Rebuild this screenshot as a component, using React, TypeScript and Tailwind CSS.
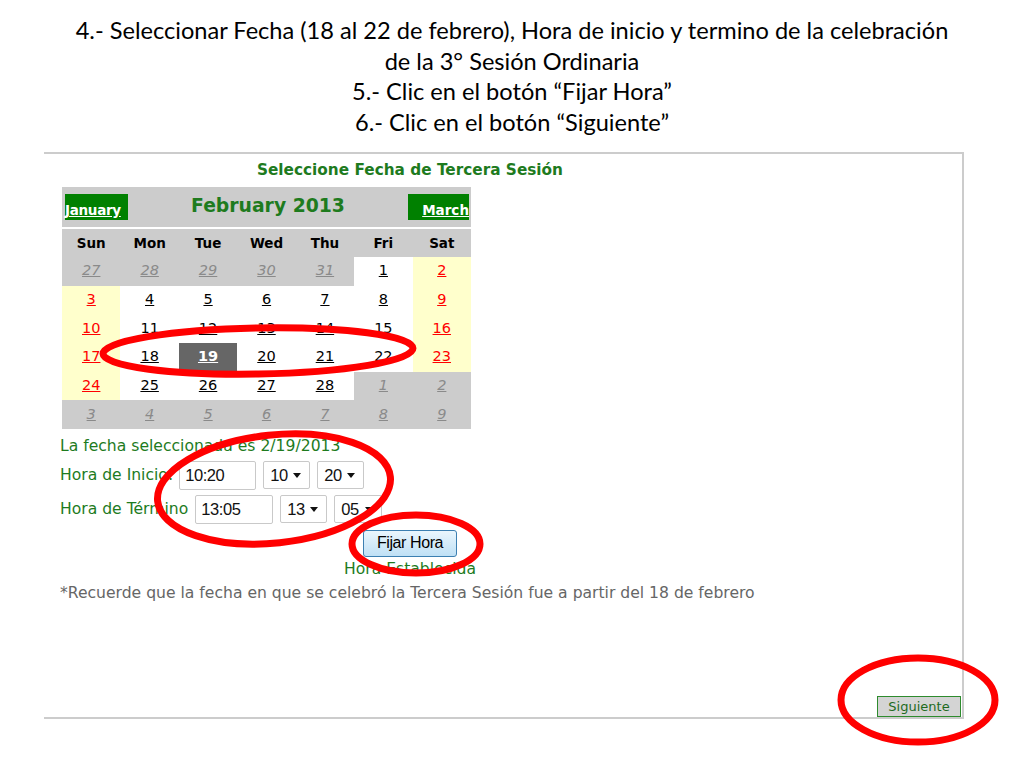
import React from "react";

type Cell = { d: number; kind: "other" | "week" | "weekend" | "sel"; link?: boolean };

const rows: Cell[][] = [
    [
        { d: 27, kind: "other" }, { d: 28, kind: "other" }, { d: 29, kind: "other" }, { d: 30, kind: "other" },
        { d: 31, kind: "other" }, { d: 1, kind: "week" }, { d: 2, kind: "weekend" },
    ],
    [
        { d: 3, kind: "weekend" }, { d: 4, kind: "week" }, { d: 5, kind: "week" }, { d: 6, kind: "week" },
        { d: 7, kind: "week" }, { d: 8, kind: "week" }, { d: 9, kind: "weekend" },
    ],
    [
        { d: 10, kind: "weekend" }, { d: 11, kind: "week", link: false }, { d: 12, kind: "week" }, { d: 13, kind: "week" },
        { d: 14, kind: "week" }, { d: 15, kind: "week", link: false }, { d: 16, kind: "weekend" },
    ],
    [
        { d: 17, kind: "weekend" }, { d: 18, kind: "week" }, { d: 19, kind: "sel" }, { d: 20, kind: "week" },
        { d: 21, kind: "week" }, { d: 22, kind: "week", link: false }, { d: 23, kind: "weekend" },
    ],
    [
        { d: 24, kind: "weekend" }, { d: 25, kind: "week" }, { d: 26, kind: "week" }, { d: 27, kind: "week" },
        { d: 28, kind: "week" }, { d: 1, kind: "other" }, { d: 2, kind: "other" },
    ],
    [
        { d: 3, kind: "other" }, { d: 4, kind: "other" }, { d: 5, kind: "other" }, { d: 6, kind: "other" },
        { d: 7, kind: "other" }, { d: 8, kind: "other" }, { d: 9, kind: "other" },
    ],
];

const cellClass = {
    other: "bg-[#cccccc] text-[#8a8a8a] italic underline",
    week: "bg-white text-black",
    weekend: "bg-[#ffffcc] text-[#ff0000] underline",
    sel: "bg-[#666666] text-white font-bold underline",
};

const Select = ({ value, w }: { value: string; w: string }) => (
    <div className={`${w} h-[28px] flex items-center justify-between pl-[6px] pr-[8px] border border-[#c9c9c9] rounded-[2px] bg-white text-[16.5px] text-[#111] tracking-tight font-['Liberation_Sans',sans-serif]`}>
        <span>{value}</span>
        <svg width="8" height="5" viewBox="0 0 8 5">
            <path d="M0 0h8L4 5z" fill="#111" />
        </svg>
    </div>
);

const TextBox = ({ value, w }: { value: string; w: string }) => (
    <div className={`${w} h-[29px] flex items-center pl-[5px] border border-[#c9c9c9] rounded-[2px] bg-white text-[16.5px] text-[#111] tracking-tight font-['Liberation_Sans',sans-serif]`}>
        {value}
    </div>
);

export default function App() {
    return (
        <div className="relative w-[1024px] h-[768px] bg-white overflow-hidden">
            {/* Slide heading */}
            <div className="pt-[15px] text-center text-[23.6px] leading-[30.5px] text-black font-['Lato',sans-serif]">
                <p>4.- Seleccionar Fecha (18 al 22 de febrero), Hora de inicio y termino de la celebración</p>
                <p>de la 3° Sesión Ordinaria</p>
                <p>5.- Clic en el botón “Fijar Hora”</p>
                <p>6.- Clic en el botón “Siguiente”</p>
            </div>

            {/* Screenshot frame */}
            <div className="absolute left-[44px] top-[152px] w-[920px] h-[567px] flex flex-col border-t-2 border-r-2 border-b-2 border-[#cccccc] font-['DejaVu_Sans',sans-serif]">
                <div className="w-[700px] ml-[16px] flex flex-col">
                    <p className="mt-[6px] text-center text-[15.3px] leading-[20px] font-bold text-[#1e7b1e]">
                        Seleccione Fecha de Tercera Sesión
                    </p>

                    {/* Calendar */}
                    <div className="mt-[7px] ml-[2px] w-[409px] flex flex-col">
                        <div className="h-[40px] bg-[#cccccc] flex items-center justify-between pl-[3px] pr-[2px]">
                            <div className="w-[63px] h-[26px] bg-[#008000] flex items-end">
                                <span className="text-white text-[13.5px] font-bold underline leading-[19px] tracking-[-0.3px]">January</span>
                            </div>
                            <span className="text-[#1e7b1e] text-[18.8px] font-bold pb-[2px]">February 2013</span>
                            <div className="w-[61px] h-[26px] bg-[#008000] flex items-end justify-end">
                                <span className="text-white text-[13.5px] font-bold underline leading-[19px]">March</span>
                            </div>
                        </div>
                        <div className="mt-[2px] h-[28px] bg-[#cccccc] grid grid-cols-7 items-center text-center text-[13.5px] font-bold text-black">
                            {["Sun", "Mon", "Tue", "Wed", "Thu", "Fri", "Sat"].map((d) => (
                                <span key={d}>{d}</span>
                            ))}
                        </div>
                        {rows.map((row, ri) => (
                            <div key={ri} className="grid grid-cols-7 h-[28.67px]">
                                {row.map((c, ci) => (
                                    <div
                                        key={ci}
                                        className={`flex items-center justify-center text-[14.5px] ${cellClass[c.kind]} ${c.kind === "week" && c.link !== false ? "underline" : ""}`}
                                    >
                                        {c.d}
                                    </div>
                                ))}
                            </div>
                        ))}
                    </div>

                    {/* Form */}
                    <div className="text-[15.6px] text-[#1e7b1e] flex flex-col">
                        <p className="mt-[8px] leading-[18px]">La fecha seleccionada es 2/19/2013</p>
                        <div className="mt-[6px] flex items-center gap-[7px]">
                            <span className="mr-[-1px]">Hora de Inicio:</span>
                            <TextBox value="10:20" w="w-[77px]" />
                            <Select value="10" w="w-[47px]" />
                            <Select value="20" w="w-[47px]" />
                        </div>
                        <div className="mt-[5px] flex items-center gap-[7px]">
                            <span>Hora de Término</span>
                            <TextBox value="13:05" w="w-[78px]" />
                            <Select value="13" w="w-[47px]" />
                            <Select value="05" w="w-[48px]" />
                        </div>
                        <div className="mt-[6px] flex justify-center">
                            <button className="w-[94px] h-[27px] rounded-[3px] border border-[#3c7fb1] bg-gradient-to-b from-[#eaf6fd] to-[#bfe0f5] text-[16px] text-black tracking-tight font-['Liberation_Sans',sans-serif]">
                                Fijar Hora
                            </button>
                        </div>
                        <p className="mt-[2px] text-center leading-[20px]">Hora Establecida</p>
                        <p className="mt-[5px] leading-[18px] text-[#666666] whitespace-nowrap">
                            *Recuerde que la fecha en que se celebró la Tercera Sesión fue a partir del 18 de febrero
                        </p>
                    </div>
                </div>

                <div className="mt-auto flex justify-end">
                    <button className="relative mr-[1px] w-[84px] h-[21px] bg-[#d4d4d4] border border-[#2e8b2e] text-[13px] text-[#1e6b1e]">
                        Siguiente
                    </button>
                </div>
            </div>

            {/* Red annotation ellipses */}
            <svg className="absolute inset-0 pointer-events-none" width="1024" height="768" viewBox="0 0 1024 768">
                <g fill="none" stroke="#ff0000" strokeWidth="7">
                    <ellipse cx="258" cy="351" rx="155" ry="23" transform="rotate(-1 258 351)" />
                    <ellipse cx="274" cy="489" rx="117" ry="54" transform="rotate(-6 274 489)" />
                    <ellipse cx="416" cy="544" rx="64" ry="29" />
                    <ellipse cx="918" cy="700" rx="77" ry="42" />
                </g>
            </svg>
        </div>
    );
}
